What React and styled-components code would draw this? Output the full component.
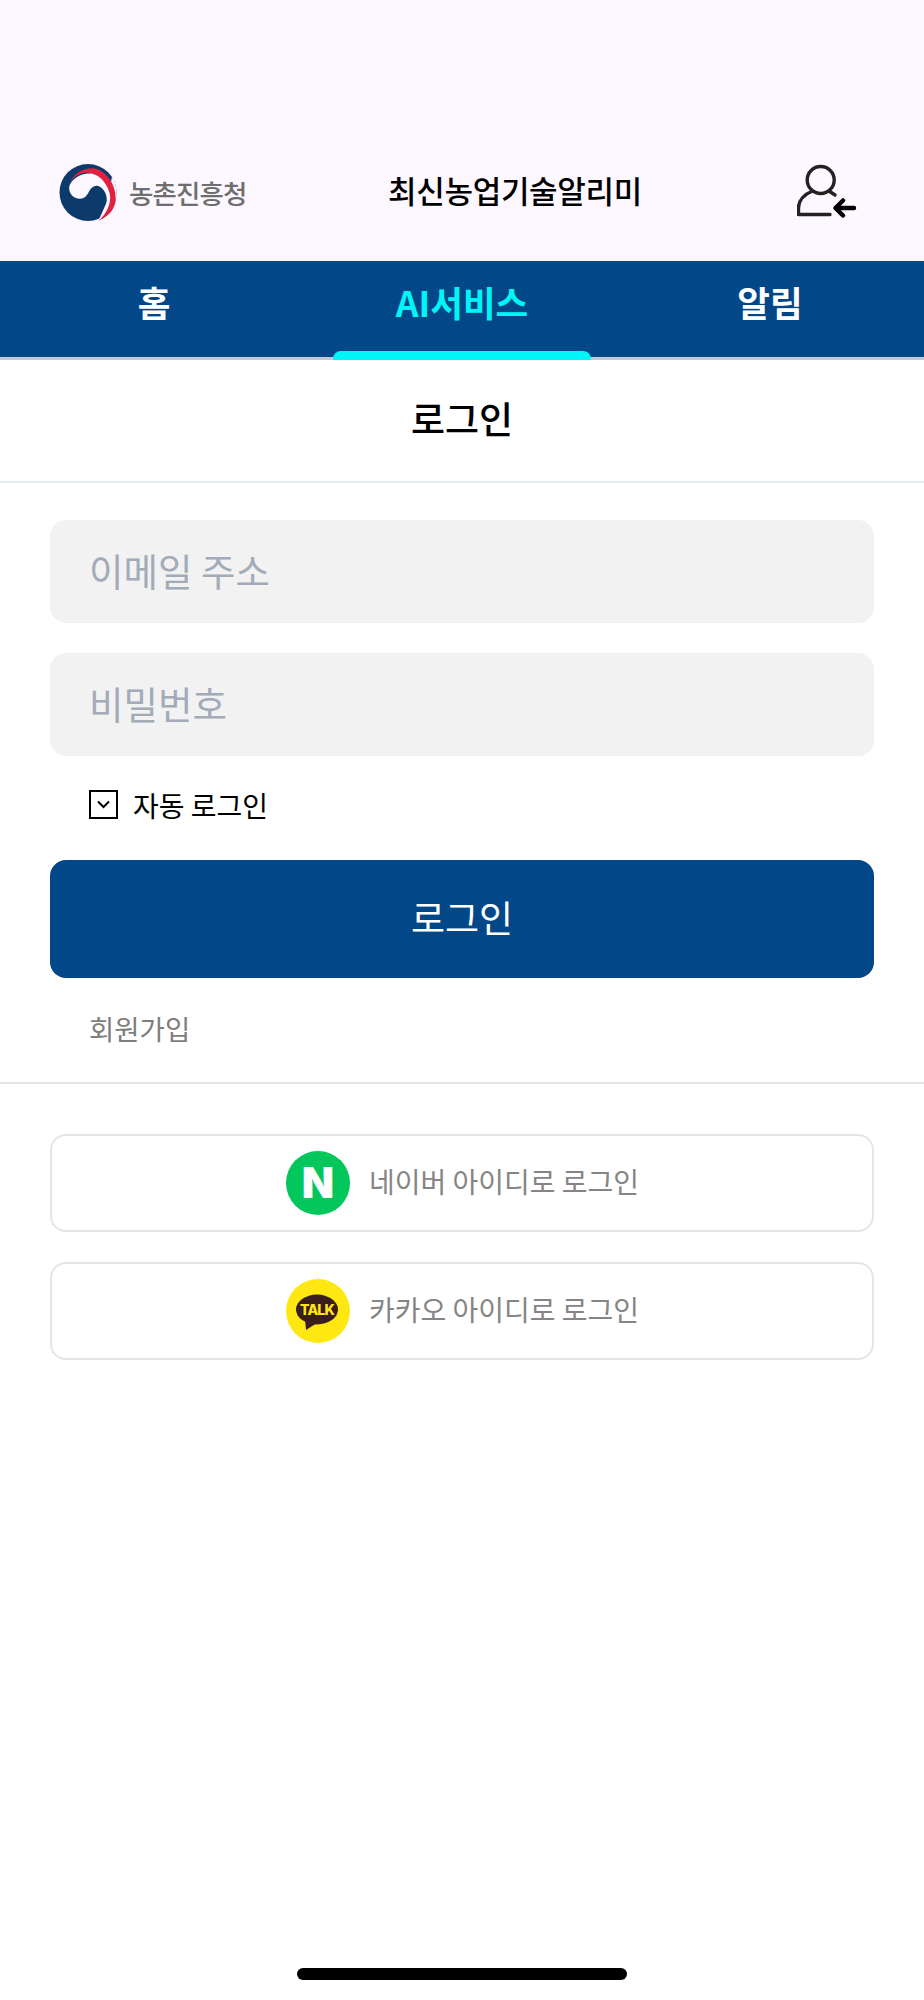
import React from 'react';
import styled, { createGlobalStyle } from 'styled-components';

const GlobalStyle = createGlobalStyle`
  html, body {
    margin: 0;
    padding: 0;
    background: #fff;
  }
  * {
    box-sizing: border-box;
  }
`;

const FONT = `"Noto Sans CJK KR", "Noto Sans", sans-serif`;

const Page = styled.div`
  display: flex;
  flex-direction: column;
  width: 924px;
  height: 2000px;
  background: #fff;
  font-family: ${FONT};
`;

const Header = styled.header`
  display: grid;
  grid-template-columns: 329px 1fr auto;
  align-items: center;
  height: 261px;
  padding: 154px 67px 31px 59px;
  background: #fdf8ff;
`;

const Brand = styled.div`
  display: flex;
  align-items: center;
  gap: 12px;
`;

const BrandName = styled.span`
  font-size: 26.5px;
  font-weight: 500;
  line-height: 1;
  letter-spacing: -0.9px;
  color: #6e6e6e;
  padding-top: 2px;
`;

const AppTitle = styled.h1`
  margin: 0 0 4px;
  font-size: 31px;
  font-weight: 500;
  line-height: 1.2;
  letter-spacing: -0.3px;
  color: #000;
`;

const UserButton = styled.div`
  display: flex;
`;

const Tabs = styled.nav`
  display: grid;
  grid-template-columns: repeat(3, 1fr);
  height: 99px;
  background: #024788;
  border-bottom: 3px solid #c3c8d4;
`;

const Tab = styled.div`
  position: relative;
  display: flex;
  justify-content: center;
  padding-top: 17px;
  font-size: 35.5px;
  font-weight: 700;
  line-height: 48px;
  color: ${({ $active }) => ($active ? '#00f6f6' : '#fff')};

  ${({ $active }) =>
    $active &&
    `
    &::after {
      content: '';
      position: absolute;
      left: 25px;
      right: 25px;
      bottom: -3px;
      height: 9px;
      border-radius: 8px 8px 0 0;
      background: #00f6f6;
    }
  `}
`;

const PageTitle = styled.div`
  display: flex;
  align-items: center;
  justify-content: center;
  height: 123px;
  padding-bottom: 5px;
  font-size: 37px;
  font-weight: 500;
  color: #000;
  border-bottom: 2px solid #e3eef8;
`;

const Form = styled.div`
  display: flex;
  flex-direction: column;
  padding: 37px 50px 0;
`;

const Input = styled.input`
  display: block;
  width: 100%;
  height: 103px;
  margin-bottom: 30px;
  padding: 0 39px 4px;
  border: none;
  border-radius: 16px;
  background: #f2f2f2;
  font-family: ${FONT};
  font-size: 37.5px;
  color: #333;

  &::placeholder {
    color: #a3abb8;
    opacity: 1;
  }
`;

const AutoLogin = styled.label`
  display: flex;
  align-items: center;
  gap: 15px;
  height: 29px;
  margin: 4px 0 41px 39px;
  font-size: 28px;
  color: #000;
`;

const CheckBox = styled.span`
  display: flex;
  align-items: center;
  justify-content: center;
  width: 29px;
  height: 29px;
  border: 2px solid #000;
`;

const SubmitButton = styled.button`
  height: 118px;
  padding: 0 0 5px;
  border: none;
  border-radius: 16px;
  background: #024788;
  font-family: ${FONT};
  font-size: 37px;
  color: #fff;
`;

const SignUp = styled.div`
  margin: 31px 0 0 39px;
  font-size: 27.5px;
  line-height: 38px;
  color: #7d7d7d;
`;

const Divider = styled.hr`
  width: 100%;
  height: 2px;
  margin: 35px 0 50px;
  border: none;
  background: #e5e5e5;
`;

const SocialList = styled.div`
  display: flex;
  flex-direction: column;
  gap: 30px;
  padding: 0 50px;
`;

const SocialButton = styled.button`
  display: flex;
  align-items: center;
  justify-content: center;
  gap: 19px;
  height: 98px;
  padding: 0 0 0 1px;
  border: 2.5px solid #e5e5e5;
  border-radius: 16px;
  background: #fff;
  font-family: ${FONT};
  font-size: 28px;
  color: #858585;
`;

const SocialLabel = styled.span`
  padding-bottom: 4px;
`;

const SocialBadge = styled.span`
  display: flex;
  align-items: center;
  justify-content: center;
  width: 64px;
  height: 64px;
  border-radius: 50%;
  background: ${({ $color }) => $color};
`;

const NaverMark = styled.span`
  font-family: "Inter", "Liberation Sans", sans-serif;
  font-size: 42px;
  font-weight: 900;
  line-height: 1;
  color: #fff;
`;

const HomeIndicator = styled.div`
  width: 330px;
  height: 12px;
  margin: auto auto 20px;
  border-radius: 6px;
  background: #000;
`;

const GovLogo = () => (
  <svg width="58" height="57" viewBox="0 0 100 100">
    <circle cx="50" cy="50" r="50" fill="#0b3a6b" />
    <path d="M68 100 C 88 92 100 72 100 50 C 100 40 97 30 92 22 L 86 60 Z" fill="#fdf8ff" />
    <path
      d="M17 34 C 26 14 46 5 62 8 C 86 14 102 42 98 68 C 94 84 82 94 68 100 C 82 88 92 68 88 52 C 84 32 62 12 42 16 C 30 19 22 26 17 34 Z"
      fill="#e2203f"
    />
    <path
      d="M17 40 C 20 26 40 14 58 17 C 76 22 90 44 88 60 C 86 74 80 84 74 90 C 86 72 86 52 74 42 C 64 34 56 40 52 48 C 48 56 44 61 36 61 C 24 61 16 52 17 40 Z"
      fill="#fdf8ff"
    />
  </svg>
);

const UserArrowIcon = () => (
  <svg width="60" height="60" viewBox="0 0 60 60" fill="none" strokeLinecap="round" strokeLinejoin="round">
    <g stroke="#222" strokeWidth="3.4">
      <circle cx="23.7" cy="18" r="13.5" />
      <path d="M15.5 29 C 8 32 1.5 38 1.5 46 V 52.5 H 33" />
      <path d="M32 29 L 38 33" />
    </g>
    <path d="M57 46 H 39 M 46 38.5 L 38.5 46 L 46 53.5" stroke="#000" strokeWidth="4.5" />
  </svg>
);

const ChevronIcon = () => (
  <svg width="15" height="9" viewBox="0 0 15 9" fill="none">
    <path d="M2 1.5 L7.5 7 L13 1.5" stroke="#000" strokeWidth="2" />
  </svg>
);

const KakaoIcon = () => (
  <svg width="44" height="44" viewBox="0 0 44 44">
    <ellipse cx="21" cy="20.5" rx="21" ry="15" fill="#3a1d1d" />
    <path d="M9 30 L 10 41 L 21 34 Z" fill="#3a1d1d" />
    <text
      x="21"
      y="25.5"
      textAnchor="middle"
      fontFamily="Inter, Liberation Sans, sans-serif"
      fontSize="14"
      fontWeight="800"
      letterSpacing="-0.8"
      fill="#ffe812"
    >
      TALK
    </text>
  </svg>
);

const App = () => {
  return (
    <Page>
      <GlobalStyle />
      <Header>
        <Brand>
          <GovLogo />
          <BrandName>농촌진흥청</BrandName>
        </Brand>
        <AppTitle>최신농업기술알리미</AppTitle>
        <UserButton>
          <UserArrowIcon />
        </UserButton>
      </Header>

      <Tabs>
        <Tab>홈</Tab>
        <Tab $active>AI서비스</Tab>
        <Tab>알림</Tab>
      </Tabs>

      <PageTitle>로그인</PageTitle>

      <Form>
        <Input placeholder="이메일 주소" />
        <Input placeholder="비밀번호" />
        <AutoLogin>
          <CheckBox>
            <ChevronIcon />
          </CheckBox>
          자동 로그인
        </AutoLogin>
        <SubmitButton>로그인</SubmitButton>
        <SignUp>회원가입</SignUp>
      </Form>

      <Divider />

      <SocialList>
        <SocialButton>
          <SocialBadge $color="#03c75a">
            <NaverMark>N</NaverMark>
          </SocialBadge>
          <SocialLabel>네이버 아이디로 로그인</SocialLabel>
        </SocialButton>
        <SocialButton>
          <SocialBadge $color="#ffe812">
            <KakaoIcon />
          </SocialBadge>
          <SocialLabel>카카오 아이디로 로그인</SocialLabel>
        </SocialButton>
      </SocialList>

      <HomeIndicator />
    </Page>
  );
};

export default App;
